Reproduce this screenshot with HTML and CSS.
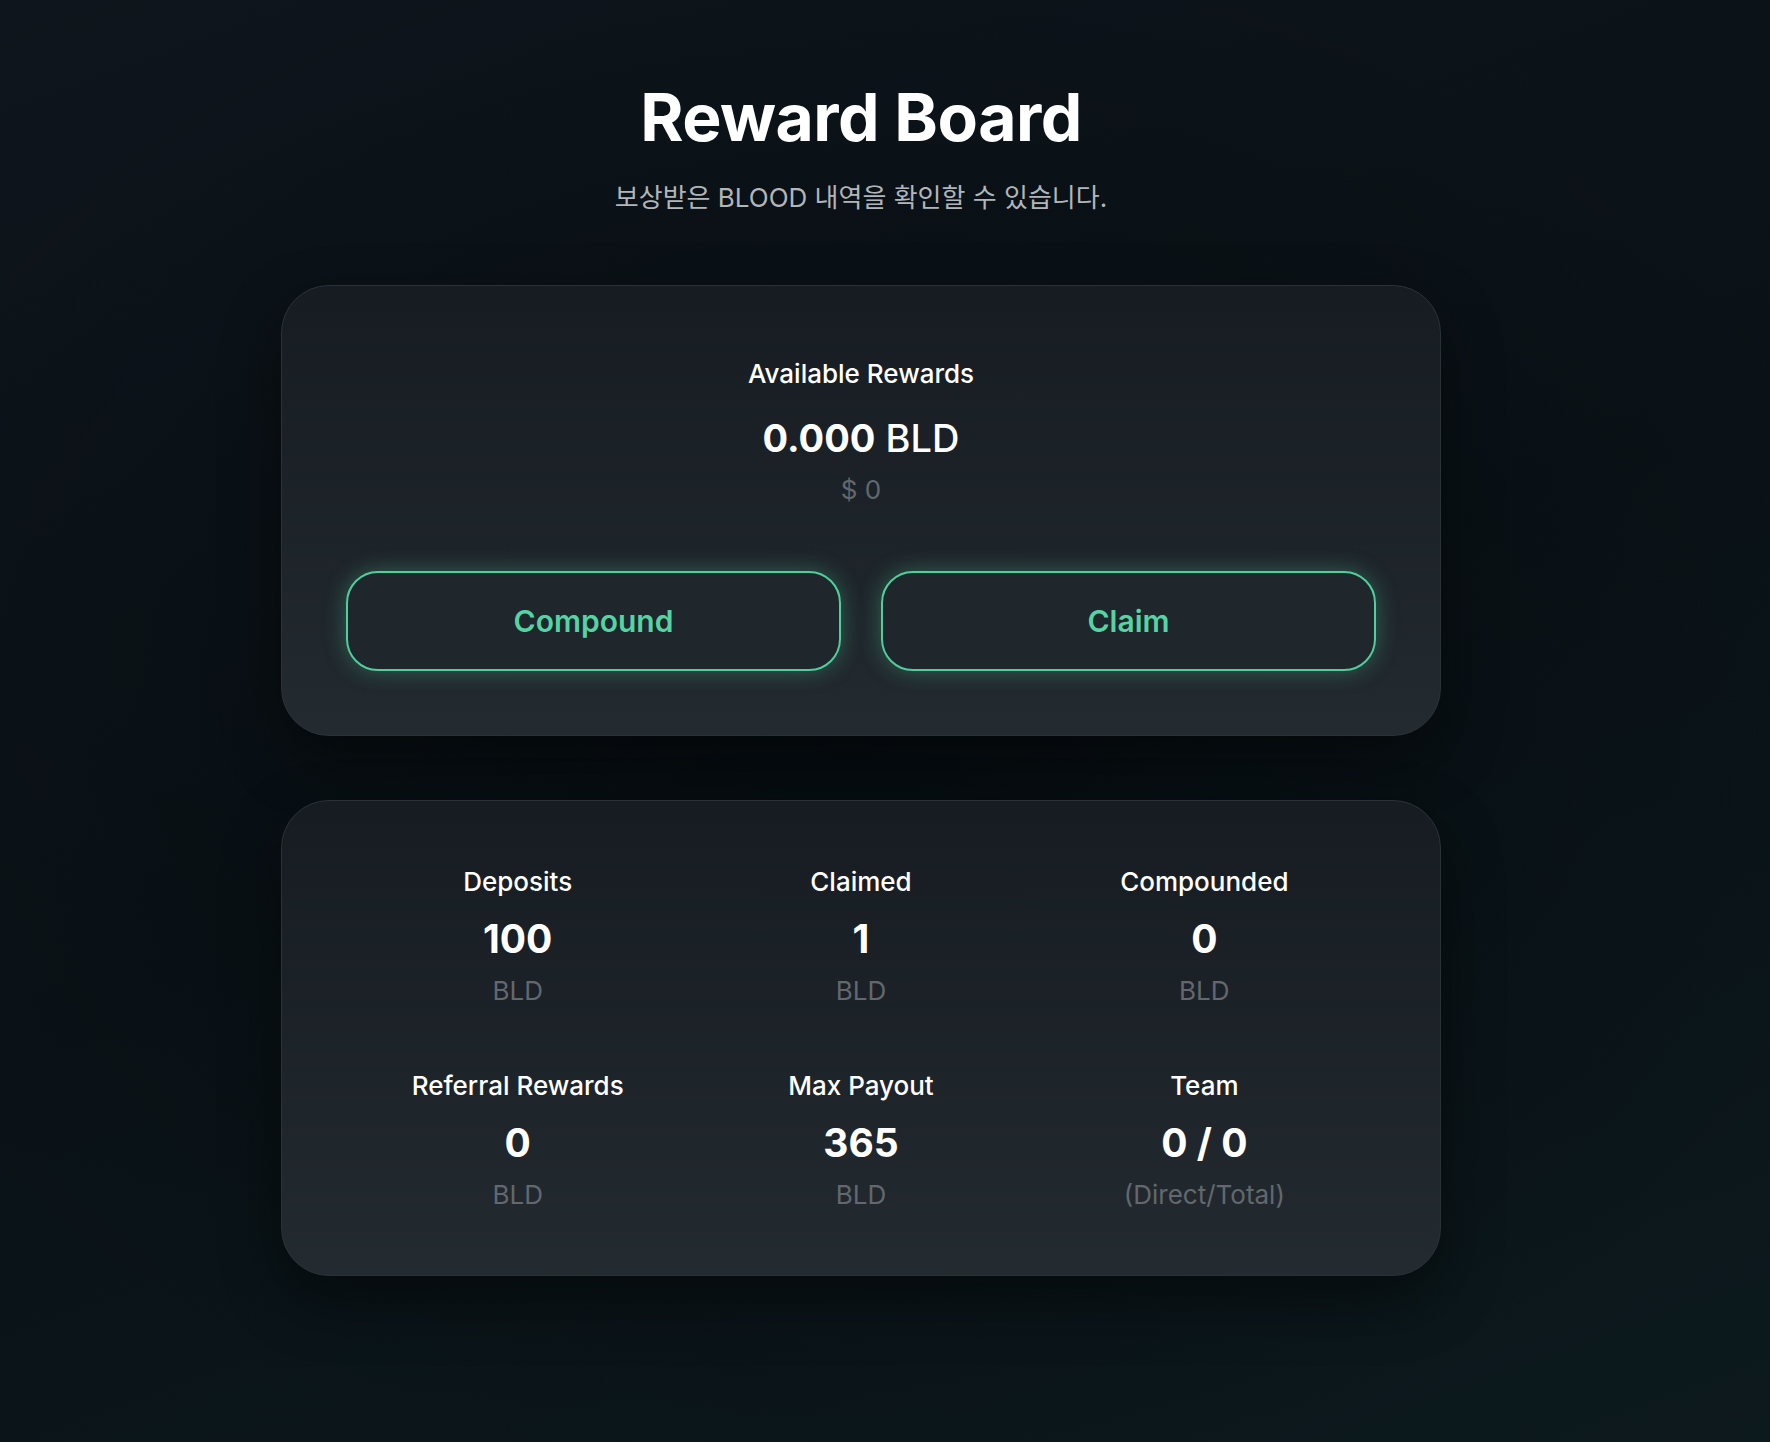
FILE: index.html
```html
<!DOCTYPE html>
<html lang="ko">
<head>
<meta charset="utf-8">
<title>Reward Board</title>
<link rel="stylesheet" href="styles.css">
</head>
<body>
<main class="page">
  <header class="intro">
    <h1 class="title">Reward Board</h1>
    <p class="subtitle">보상받은 BLOOD 내역을 확인할 수 있습니다.</p>
  </header>

  <section class="card rewards">
    <div class="rewards-label">Available Rewards</div>
    <div class="rewards-amount"><strong>0.000</strong> BLD</div>
    <div class="rewards-usd">$ 0</div>
    <div class="actions">
      <button class="btn">Compound</button>
      <button class="btn">Claim</button>
    </div>
  </section>

  <section class="card stats">
    <div class="stat">
      <div class="stat-label">Deposits</div>
      <div class="stat-value">100</div>
      <div class="stat-unit">BLD</div>
    </div>
    <div class="stat">
      <div class="stat-label">Claimed</div>
      <div class="stat-value">1</div>
      <div class="stat-unit">BLD</div>
    </div>
    <div class="stat">
      <div class="stat-label">Compounded</div>
      <div class="stat-value">0</div>
      <div class="stat-unit">BLD</div>
    </div>
    <div class="stat">
      <div class="stat-label">Referral Rewards</div>
      <div class="stat-value">0</div>
      <div class="stat-unit">BLD</div>
    </div>
    <div class="stat">
      <div class="stat-label">Max Payout</div>
      <div class="stat-value">365</div>
      <div class="stat-unit">BLD</div>
    </div>
    <div class="stat">
      <div class="stat-label">Team</div>
      <div class="stat-value">0 / 0</div>
      <div class="stat-unit">(Direct/Total)</div>
    </div>
  </section>
</main>
</body>
</html>
```

FILE: styles.css
```css
* { box-sizing: border-box; }

html, body {
  margin: 0;
  padding: 0;
}

body {
  min-height: 1442px;
  background:
    radial-gradient(ellipse 60% 55% at 48% 50%, rgba(6, 12, 16, 0.9) 0%, rgba(6, 12, 16, 0) 100%),
    linear-gradient(160deg, #0e151c 0%, #0a1217 50%, #0c191d 100%);
  font-family: Inter, "Noto Sans CJK KR", "Noto Sans", sans-serif;
  color: #ffffff;
}

.page {
  display: flex;
  flex-direction: column;
  align-items: center;
  padding: 0 48px 120px 0;
}

.intro {
  display: flex;
  flex-direction: column;
  align-items: center;
  padding-top: 77px;
}

.title {
  margin: 0;
  font-size: 66px;
  line-height: 80px;
  font-weight: 700;
  letter-spacing: -0.5px;
  color: #ffffff;
}

.subtitle {
  margin: 25px 0 0;
  font-size: 26px;
  line-height: 32px;
  color: #b1b6ba;
  font-family: Inter, "Noto Sans CJK KR", sans-serif;
}

.card {
  width: 1160px;
  border: 1px solid #2a3238;
  border-radius: 48px;
  background: linear-gradient(180deg, #161c21 0%, #232a30 100%);
  box-shadow: 0 24px 60px rgba(0, 0, 0, 0.45);
  padding: 64px;
}

.rewards {
  margin-top: 71px;
  display: flex;
  flex-direction: column;
  align-items: center;
}

.rewards-label {
  font-size: 26px;
  line-height: 48px;
  font-weight: 500;
}

.rewards-amount {
  margin-top: 16px;
  font-size: 38px;
  line-height: 48px;
  font-weight: 500;
}

.rewards-amount strong {
  font-weight: 700;
}

.rewards-usd {
  margin-top: 12px;
  font-size: 26px;
  line-height: 32px;
  color: #62686d;
}

.actions {
  margin-top: 65px;
  width: 100%;
  display: grid;
  grid-template-columns: 1fr 1fr;
  gap: 40px;
}

.btn {
  height: 100px;
  border: 2px solid #4fcf9c;
  border-radius: 32px;
  background: #1f262c;
  box-shadow: 0 0 22px rgba(79, 207, 156, 0.35);
  color: #56d3a2;
  font-family: Inter, sans-serif;
  font-size: 30px;
  font-weight: 600;
  cursor: pointer;
}

.stats {
  margin-top: 64px;
  padding-top: 65px;
  display: grid;
  grid-template-columns: repeat(3, 1fr);
  row-gap: 63px;
}

.stat {
  display: flex;
  flex-direction: column;
  align-items: center;
}

.stat-label {
  font-size: 26px;
  line-height: 32px;
  font-weight: 500;
}

.stat-value {
  margin-top: 18px;
  font-size: 39px;
  line-height: 46px;
  font-weight: 700;
}

.stat-unit {
  margin-top: 13px;
  font-size: 26px;
  line-height: 32px;
  color: #62686d;
}
```
